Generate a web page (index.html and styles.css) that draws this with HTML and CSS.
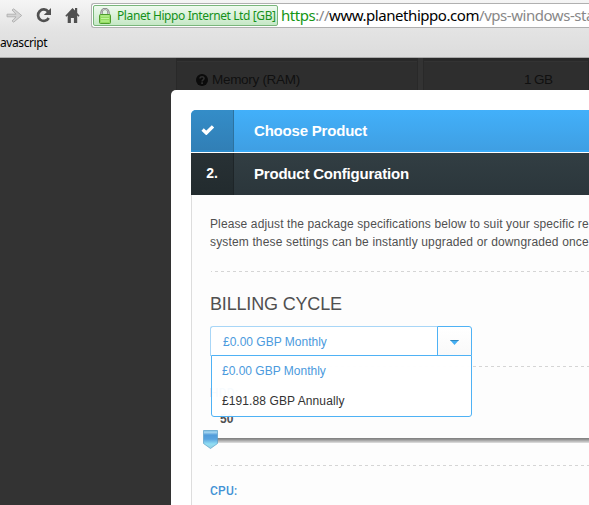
FILE: index.html
```html
<!DOCTYPE html>
<html lang="en">
<head>
<meta charset="utf-8">
<title>Planet Hippo</title>
<link rel="stylesheet" href="styles.css">
</head>
<body>
<header class="browser">
  <div class="toolbar">
    <svg class="nav-icons" width="91" height="31" viewBox="0 0 91 31">
      <path d="M7 14.2h9l-4-4.2 1.7-1.2 8 6.7-8 6.7-1.7-1.2 4-4.2H7z" fill="#d4d4d4" stroke="#aaa" stroke-width=".8"/>
      <path d="M48.2 11.6A5.7 5.7 0 1 0 48.7 18" fill="none" stroke="#505050" stroke-width="2.7"/>
      <path d="M51 8v7h-7.2z" fill="#505050"/>
      <path d="M65.3 15.7 72.5 8l2.5 2.6V8h2.2v5l2.4 2.7-1.1 1.1-1.3-1.3V23h-3.3v-5h-3v5h-3.2v-7.5l-1.3 1.3z" fill="#505050"/>
    </svg>
    <div class="omnibox">
      <div class="identity">
        <svg width="12" height="16" viewBox="0 0 12 16">
          <path d="M2.5 8V4.5a3.5 3.5 0 0 1 7 0V8" fill="none" stroke="#777" stroke-width="2.2"/>
          <path d="M2.5 8V4.5a3.5 3.5 0 0 1 7 0V8" fill="none" stroke="#ddd" stroke-width=".8"/>
          <rect x=".5" y="6.5" width="11" height="9" rx="1" fill="#93dc62" stroke="#4e9b2e"/>
          <path d="M2 8h8M2 10.5h8M2 13h8" stroke="#c1f49c"/>
        </svg>
        <span class="owner">Planet Hippo Internet Ltd [GB]</span>
      </div>
      <div class="url"><span class="secure">https</span>://<span class="host">www.planethippo.com</span>/vps-windows-sta</div>
    </div>
  </div>
  <div class="bookmarks">avascript</div>
</header>
<main class="page">
  <div class="specs">
    <div class="spec-name">
      <svg width="12" height="12" viewBox="0 0 12 12"><circle cx="6" cy="6" r="6" fill="#0b0b0b"/><path d="M4 4.6C4 2 8.2 2.2 8 4.5 7.9 5.8 6.1 5.8 6.1 7.4" fill="none" stroke="#303030" stroke-width="1.6"/><path d="M5.2 8.3H7V10H5.2z" fill="#303030"/></svg>
      <span class="spec-label">Memory (RAM)</span>
    </div>
    <div class="spec-value">1 GB</div>
  </div>
  <section class="modal">
    <div class="step done">
      <div class="step-mark"><svg width="14" height="10" viewBox="0 0 14 10"><path d="M1.6 4.6 5.3 8 12 1.4" fill="none" stroke="#fff" stroke-width="3.4"/></svg></div>
      <div class="step-title choose">Choose Product</div>
    </div>
    <div class="step current">
      <div class="step-mark">2.</div>
      <div class="step-title config">Product Configuration</div>
    </div>
    <div class="panel">
      <div class="intro"><div class="line-one">Please adjust the package specifications below to suit your specific re</div><div class="line-two">system these settings can be instantly upgraded or downgraded once</div></div>
      <div class="rule"></div>
      <h2>BILLING CYCLE</h2>
      <div class="select">
        <div class="select-value">£0.00 GBP Monthly</div>
        <div class="select-button"><svg width="9" height="5" viewBox="0 0 9 5"><path d="M0 0h9L4.5 5z" fill="#45b0f5"/><path d="M0 0h9L8 1H1z" fill="#3087bd"/></svg></div>
        <div class="menu">
          <div class="option chosen">£0.00 GBP Monthly</div>
          <div class="option annual">£191.88 GBP Annually</div>
        </div>
      </div>
      <div class="rule after-select"></div>
      <div class="label hdd">HDD:</div>
      <div class="amount">50</div>
      <div class="slider">
        <div class="track"></div>
        <svg class="thumb" width="15" height="19" viewBox="0 0 15 19">
          <defs><linearGradient id="g" x2="0" y2="1"><stop offset="0" stop-color="#78bde5"/><stop offset=".1" stop-color="#a5d5f0"/><stop offset=".25" stop-color="#529cda"/><stop offset=".48" stop-color="#5aa4df"/><stop offset=".75" stop-color="#91def4"/><stop offset="1" stop-color="#96cfdf"/></linearGradient></defs>
          <path d="M.5.5h14v13l-7 5-7-5z" fill="url(#g)" stroke="#5b9fc8" stroke-opacity=".7"/>
        </svg>
      </div>
      <div class="rule"></div>
      <div class="label cpu">CPU:</div>
    </div>
  </section>
</main>
</body>
</html>
```
FILE: styles.css
```css
* { box-sizing: border-box; }
html { overflow: hidden; }
body {
  margin: 0;
  width: 589px;
  height: 505px;
  overflow: hidden;
  font-family: "Liberation Sans", Arial, sans-serif;
  font-size: 12px;
  color: #505050;
  background: #333;
}
.browser {
  height: 58px;
  background: linear-gradient(#f5f5f5, #e3e3e3 55%, #dcdcdc);
  border-bottom: 1px solid #aaa;
  font-family: "Noto Sans", "Open Sans", sans-serif;
  white-space: nowrap;
}
.toolbar { display: flex; height: 31px; }
.nav-icons { flex: none; }
.omnibox {
  display: flex;
  flex: 1;
  min-width: 0;
  height: 25px;
  margin-top: 3px;
  padding: 1px 0 1px 1px;
  border: 1px solid #b0b0b0;
  border-right: 0;
  border-radius: 3px 0 0 3px;
  background: #fff;
}
.identity {
  display: flex;
  flex: none;
  width: 185px;
  height: 21px;
  padding: 2px 0 0 5px;
  border: 1px solid #79b67b;
  border-radius: 2px;
  background: linear-gradient(#effaef, #c6e8c6);
}
.owner {
  margin-left: 6px;
  color: #14911a;
  font-size: 12px;
  line-height: 16px;
  letter-spacing: -.4px;
}
.url {
  margin-left: 3px;
  font-size: 15px;
  line-height: 21px;
  letter-spacing: -.45px;
  color: #888;
}
.secure { color: #149614; }
.host { color: #000; }
.bookmarks {
  padding-top: 4px;
  color: #000;
  font-size: 12px;
  line-height: 16px;
  letter-spacing: -.42px;
}
.page { position: relative; height: 447px; overflow: hidden; }
.specs {
  display: flex;
  gap: 5px;
  margin-left: 176px;
  height: 60px;
  color: #101010;
  font-size: 13.5px;
  line-height: 16px;
}
.spec-name, .spec-value {
  flex: none;
  padding-top: 14px;
  background: linear-gradient(#292929 0 3px, #333 3px 4px, #2e2e2e 4px);
  border: 0 solid #292929;
  border-width: 0 1px;
}
.spec-name { display: flex; width: 242px; padding-left: 19px; }
.spec-name svg { margin-top: 2px; }
.spec-label { margin-left: 4px; letter-spacing: -.3px; }
.spec-value { flex: 1; padding-left: 100px; letter-spacing: -.6px; }
.modal {
  position: absolute;
  left: 171px;
  top: 32px;
  width: 418px;
  height: 440px;
  padding: 20px 0 0 20px;
  background: #fff;
  border-radius: 5px 0 0;
}
.step {
  display: flex;
  height: 42px;
  color: #fff;
  font-size: 15px;
  font-weight: bold;
  line-height: 42px;
}
.step-mark { width: 43px; border-right: 1px solid; text-align: center; }
.step-title { padding-left: 20px; }
.done {
  border-radius: 5px 0 0;
  background: linear-gradient(#42b0fa, #3f9fe3 40px, #39abf9 40px);
  overflow: hidden;
}
.done .step-mark {
  padding-right: 8px;
  background: linear-gradient(#348dc8, #317fb6 40px, #2c8bcb 40px);
  border-color: #2d729f;
}
.done svg { vertical-align: 1px; }
.current { margin-top: 1px; background: linear-gradient(#323e43, #2b363b); }
.current .step-mark {
  background: linear-gradient(#283135, #222b2e);
  border-color: #1e2528;
  font-size: 14px;
  line-height: 40px;
}
.choose { letter-spacing: -.2px; }
.config { letter-spacing: -.2px; }
.panel {
  height: 320px;
  padding: 20px 0 0 18px;
  border-left: 1px solid #ddd;
  background: #fdfdfd;
}
.intro { line-height: 18px; white-space: nowrap; }
.line-one { letter-spacing: .12px; }
.line-two { letter-spacing: .15px; }
.rule {
  height: 1px;
  margin-left: 1px;
  background: repeating-linear-gradient(90deg, #d5d5d5 0 3px, transparent 3px 6px);
  background-position: -2px 0;
}
.intro + .rule { margin-top: 20px; }
h2 {
  margin: 21px 0 0;
  font-size: 18px;
  font-weight: normal;
  line-height: 22px;
  letter-spacing: -.17px;
}
.select {
  position: relative;
  display: flex;
  width: 262px;
  height: 30px;
  margin-top: 11px;
  color: #4b9add;
  line-height: 30px;
}
.select-value {
  width: 227px;
  border: 1px solid #a8d6f7;
  border-right: 0;
  border-radius: 3px 0 0;
  background: #fff;
  padding-left: 12px;
}
.select-button {
  display: flex;
  justify-content: center;
  width: 35px;
  border: 1px solid #4fb2f5;
  border-radius: 0 3px 0 0;
  background: linear-gradient(#fff, #f9f9f9);
}
.select-button svg { margin-top: 13px; }
.menu {
  position: absolute;
  z-index: 1;
  left: 1px;
  top: 29px;
  width: 261px;
  height: 62px;
  padding-left: 10px;
  border: 1px solid #4fb2f5;
  border-radius: 1px 1px 3px 3px;
  background: rgba(255, 255, 255, .96);
}
.option { height: 30px; color: #333; }
.annual { letter-spacing: .1px; }
.chosen { color: #4b9add; }
.after-select { margin-top: 10px; }
.label {
  color: #4292d5;
  font-family: Roboto, sans-serif;
  font-weight: 500;
  line-height: 16px;
  letter-spacing: .25px;
}
.hdd { margin-top: 18px; }
.amount {
  margin: 10px 0 0 10px;
  font-weight: bold;
  line-height: 16px;
}
.slider { position: relative; height: 38px; padding-top: 11px; }
.track {
  height: 5px;
  background: linear-gradient(#848484 0 1px, #939393 1px 2px, #aaa 2px 3px, #bfbfbf 3px 4px, #d6d6d6 4px);
}
.thumb { position: absolute; left: -7px; top: 3px; }
.cpu { margin-top: 17px; }
```
